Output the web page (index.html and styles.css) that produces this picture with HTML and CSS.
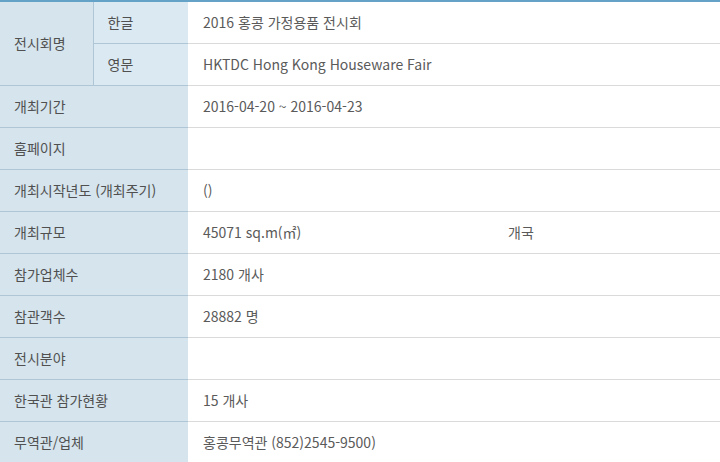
FILE: index.html
```html
<!DOCTYPE html>
<html lang="ko">
<head>
<meta charset="utf-8">
<link rel="stylesheet" href="styles.css">
</head>
<body>
<table class="info">
  <colgroup>
    <col class="c1"><col class="c2"><col>
  </colgroup>
  <tbody>
    <tr>
      <th rowspan="2" class="head">전시회명</th>
      <th class="sub">한글</th>
      <td>2016 홍콩 가정용품 전시회</td>
    </tr>
    <tr>
      <th class="sub">영문</th>
      <td>HKTDC Hong Kong Houseware Fair</td>
    </tr>
    <tr><th colspan="2" class="head">개최기간</th><td>2016-04-20 ~ 2016-04-23</td></tr>
    <tr><th colspan="2" class="head">홈페이지</th><td></td></tr>
    <tr><th colspan="2" class="head">개최시작년도 (개최주기)</th><td>()</td></tr>
    <tr><th colspan="2" class="head">개최규모</th><td><div class="split"><span>45071 sq.m(㎡)</span><span>개국</span></div></td></tr>
    <tr><th colspan="2" class="head">참가업체수</th><td>2180 개사</td></tr>
    <tr><th colspan="2" class="head">참관객수</th><td>28882 명</td></tr>
    <tr><th colspan="2" class="head">전시분야</th><td></td></tr>
    <tr><th colspan="2" class="head">한국관 참가현황</th><td>15 개사</td></tr>
    <tr><th colspan="2" class="head">무역관/업체</th><td>홍콩무역관 (852)2545-9500)</td></tr>
  </tbody>
</table>
</body>
</html>
```

FILE: styles.css
```css
html, body {
  margin: 0;
  padding: 0;
  background: #fff;
}
body {
  font-family: "Noto Sans CJK KR", "Noto Sans", sans-serif;
  font-size: 14px;
  color: #555;
}
.info {
  width: 720px;
  border-collapse: collapse;
  table-layout: fixed;
  border-top: 2px solid #64a2c8;
}
.c1 { width: 93px; }
.c2 { width: 95px; }
.info th,
.info td {
  height: 42px;
  padding: 0 0 0 14px;
  text-align: left;
  font-weight: normal;
  vertical-align: middle;
  box-sizing: border-box;
  line-height: 20px;
  white-space: nowrap;
}
.info th {
  background: #d5e4ed;
  color: #505050;
  border-bottom: 1px solid #aec6d6;
}
.info th.sub {
  background: #dbe9f2;
  border-left: 1px solid #aec6d6;
}
.info td {
  padding-left: 15px;
  border-bottom: 1px solid #dadada;
  color: #5a5a5a;
}
.split {
  display: grid;
  grid-template-columns: 305px 1fr;
}
```
